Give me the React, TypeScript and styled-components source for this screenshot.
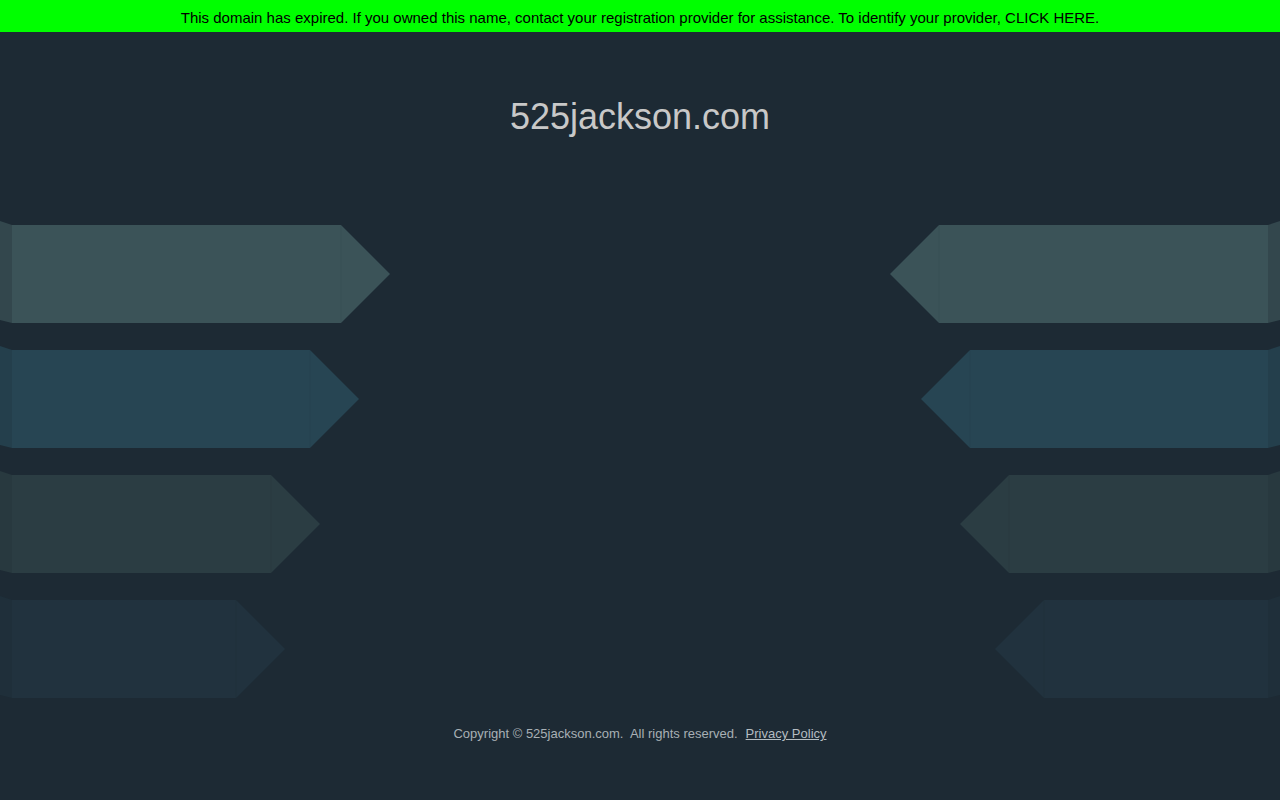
import { createGlobalStyle, styled } from "styled-components";

const GlobalStyle = createGlobalStyle`
  html, body {
    margin: 0;
    padding: 0;
    background: #1d2a34;
    font-family: "Liberation Sans", Arial, sans-serif;
  }
`;

const Page = styled.div`
  display: flex;
  flex-direction: column;
  min-height: 800px;
  background: #1d2a34;
  overflow: hidden;
`;

const Banner = styled.div`
  height: 32px;
  display: flex;
  align-items: center;
  justify-content: center;
  background: #00ff00;
  color: #000;
  font-size: 15px;
  padding-top: 3px;
  box-sizing: border-box;
`;

const Title = styled.h1`
  margin: 64px 0 0;
  text-align: center;
  font-size: 36px;
  font-weight: normal;
  line-height: 41px;
  color: #c8c8c8;
`;

const Arrows = styled.div`
  display: flex;
  flex-direction: column;
  gap: 27px;
  margin-top: 88px;
`;

const ArrowRow = styled.div`
  display: flex;
  justify-content: space-between;
  height: 98px;
`;

const ArrowSvg = styled.svg<{ $flip?: boolean }>`
  display: block;
  overflow: visible;
  transform: ${({ $flip }) => ($flip ? "scaleX(-1)" : "none")};
`;

const Footer = styled.footer`
  margin-top: 28px;
  text-align: center;
  font-size: 13px;
  line-height: 15px;
  color: #a8b0b5;
`;

const Link = styled.a`
  color: #b4bcc1;
  text-decoration: underline;
  margin-left: 8px;
`;

const rows = [
  { width: 390, body: "#3b5358", stub: "#33474d" },
  { width: 359, body: "#274553", stub: "#243f4c" },
  { width: 320, body: "#2b3d43", stub: "#28393f" },
  { width: 285, body: "#21323e", stub: "#1f2f3a" },
];

const Arrow = ({ width, body, stub, flip }: { width: number; body: string; stub: string; flip?: boolean }) => {
  const neck = width - 49;
  return (
    <ArrowSvg $flip={flip} width={width} height={98} viewBox={`0 0 ${width} 98`}>
      <polygon points="0,-4 12,0 12,98 0,95" fill={stub} />
      <polygon points={`12,0 ${neck},0 ${width},49 ${neck},98 12,98`} fill={body} />
      <line x1={neck} y1={0} x2={neck} y2={98} stroke="rgba(0,0,0,0.04)" strokeWidth={1} />
    </ArrowSvg>
  );
};

export default function App() {
  return (
    <Page>
      <GlobalStyle />
      <Banner>
        This domain has expired. If you owned this name, contact your registration provider for assistance. To identify
        your provider, CLICK HERE.
      </Banner>
      <Title>525jackson.com</Title>
      <Arrows>
        {rows.map((r, i) => (
          <ArrowRow key={i}>
            <Arrow {...r} />
            <Arrow {...r} flip />
          </ArrowRow>
        ))}
      </Arrows>
      <Footer>
        Copyright © 525jackson.com.&nbsp; All rights reserved.
        <Link href="#">Privacy Policy</Link>
      </Footer>
    </Page>
  );
}
